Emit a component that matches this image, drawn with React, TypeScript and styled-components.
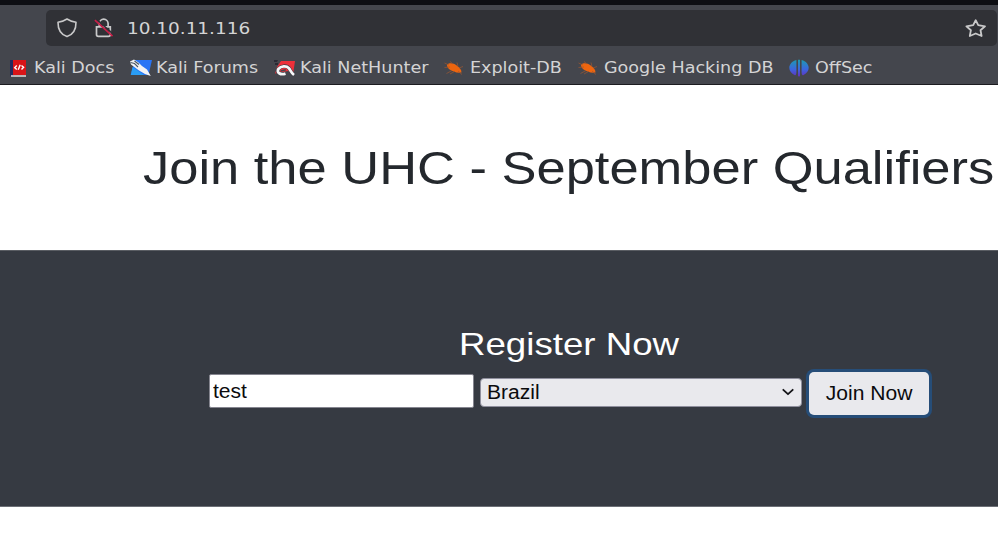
import React from "react";
import styled, { createGlobalStyle } from "styled-components";

const GlobalStyle = createGlobalStyle`
  * { box-sizing: border-box; }
  body { margin: 0; background: #fff; overflow: hidden; }
`;

const Page = styled.div`
  width: 998px;
  height: 559px;
  overflow: hidden;
  background: #fff;
  font-family: "Liberation Sans", Arial, sans-serif;
`;

const Browser = styled.header`
  height: 85px;
  background: #44464d;
  border-top: 5px solid #0d0e13;
  border-bottom: 1px solid #1c1c20;
  color: #d4d4d5;
  font-family: "DejaVu Sans", Verdana, sans-serif;
`;

const AddressBar = styled.div`
  display: flex;
  align-items: center;
  width: 951px;
  height: 36px;
  margin: 5px 0 0 46px;
  padding: 0 11px 0 10px;
  background: #303136;
  border-radius: 5px;
`;

const LockSlot = styled.span`
  display: flex;
  margin: 0 13px 0 15px;
`;

const Stretch = styled.span<{ $x: number; $center?: boolean }>`
  display: inline-block;
  white-space: pre;
  transform: scaleX(${(p) => p.$x});
  transform-origin: ${(p) => (p.$center ? "center" : "left")};
`;

const Address = styled.div`
  flex: 1;
  padding-top: 2px;
  font-size: 16px;
  line-height: 20px;
`;

const Bookmarks = styled.nav`
  display: grid;
  grid-template-columns: 121px 144px 170px 134px 211px 100px;
  height: 38px;
  padding: 4px 0 0 9px;
  font-size: 16px;
  line-height: 34px;
`;

const Bookmark = styled.div<{ $icon: number }>`
  display: grid;
  grid-template-columns: ${(p) => p.$icon}px 1fr;
  align-items: center;
  height: 36px;
  svg { display: block; }
`;

const Hero = styled.section`
  display: flex;
  justify-content: flex-start;
  height: 165px;
  padding: 56px 0 0 143px;
`;

const Title = styled.h1`
  margin: 0;
  color: #24282d;
  font-size: 46.5px;
  font-weight: 400;
  line-height: 54px;
`;

const Register = styled.section`
  height: 257px;
  background: #363a42;
  border-top: 1px solid #5a5d63;
  border-bottom: 1px solid #6c6f76;
  padding: 74px 0 0 208px;
`;

const Subtitle = styled.h2`
  width: 722px;
  margin: 0;
  color: #fff;
  font-size: 32px;
  font-weight: 400;
  line-height: 38px;
  text-align: center;
`;

const Form = styled.form`
  display: flex;
  align-items: center;
  height: 48px;
  margin-top: 5px;
  color: #0b0b0d;
  font-size: 19.5px;
  line-height: 24px;
`;

const TextBox = styled.div`
  width: 265px;
  height: 34px;
  margin: 0 6px 2px 1px;
  padding: 4px 0 0 3px;
  background: #fff;
  border: 1px solid #85858f;
  border-radius: 2px;
`;

const SelectBox = styled.div`
  display: flex;
  align-items: center;
  justify-content: space-between;
  width: 322px;
  height: 29px;
  margin: 0 7px 0 0;
  padding: 0 7px 0 6px;
  background: #e9e9ed;
  border: 1px solid #8f8f9d;
  border-radius: 4px;
`;

const JoinButton = styled.div`
  width: 120px;
  height: 43px;
  margin-top: 3px;
  padding-top: 9px;
  background: #e9e9ed;
  border-radius: 5px;
  box-shadow: 0 0 0 3px #264d78;
  text-align: center;
`;

const ShieldIcon = () => (
  <svg width="22" height="22" viewBox="0 0 22 22" fill="none" stroke="#c9c9ca" strokeWidth="1.6" strokeLinejoin="round">
    <path d="M11 2C8.6 3.6 5.8 4.6 2 5.2C1.9 11.3 4.5 17.3 11 19.6C17.5 17.3 20.1 11.3 20 5.2C16.2 4.6 13.4 3.6 11 2Z" />
  </svg>
);

const LockIcon = () => (
  <svg width="21" height="22" viewBox="0 0 21 22" fill="none">
    <path d="M6.3 9.5V6.6a4.4 4.4 0 0 1 8.8 0v2.9M3.5 9.9h13.8v7.6a1.8 1.8 0 0 1-1.8 1.8H5.3a1.8 1.8 0 0 1-1.8-1.8Z" stroke="#c9c9ca" strokeWidth="1.7" />
    <path d="M3.3 2.1 20.2 17.2" stroke="#303136" strokeWidth="1.6" />
    <path d="M1.9 3.2 19.5 19.1" stroke="#c91e48" strokeWidth="1.7" />
  </svg>
);

const StarIcon = () => (
  <svg width="22" height="20" viewBox="0 0 22 20" fill="none" stroke="#c9c9ca" strokeWidth="1.8" strokeLinejoin="round">
    <path d="M11.7 2.2 14.2 7.2 21 8.3 16.5 12.2 17.6 18 11.7 15.5 5.8 18 6.9 12.2 2.4 8.3 9.2 7.2Z" />
  </svg>
);

const DocsIcon = () => (
  <svg width="18" height="19" viewBox="0 0 18 19">
    <path d="M1 1h4v17H2L1 16Z" fill="#242a5e" />
    <path d="M4 1h13v15H4Z" fill="#d91418" />
    <path d="M2 16.2h15v1.6H2Z" fill="#d8d2d4" />
    <path d="M7.8 6.4 5.7 8.6 7.8 10.5M9.2 10.7 11.2 5.8M12.5 6.4 14.6 8.3 12.5 10.4" fill="none" stroke="#fff" strokeWidth="1.4" />
  </svg>
);

const ForumsIcon = () => (
  <svg width="22" height="18" viewBox="0 0 22 18">
    <path d="M5 1H22L18.5 16H.8L3 8Z" fill="#2874f5" />
    <path d="M2.5 8 14 16H.8Z" fill="#2a9df4" />
    <path d="M0 2.5 4 .5 8.5 3.5 12 7 17 10.5 20.8 17 15 15 9 11.5 5 8.5 1 5.5Z" fill="#f1f2f4" />
    <path d="M.5 3.5 4.5 4.5 8 8M4.5 2 9 5.5" fill="none" stroke="#4b5662" strokeWidth="1.1" />
  </svg>
);

const HunterIcon = () => (
  <svg width="22" height="18" viewBox="0 0 22 18">
    <path d="M7 2H21L19 15.5 14 12 1 14.5 3 8Z" fill="#ed303a" />
    <path d="M0 1h4l-1 2H0ZM1 4h3v2H1Z" fill="#292a34" />
    <path d="M11 14.6C6.2 16.2 2.1 13.2 4.5 9.8C7 6.6 12.5 6.4 14.8 9C16.6 11.2 17.2 13.9 20 16" fill="none" stroke="#353942" strokeWidth="3.7" />
    <path d="M11.5 14.6C6.5 16.4 2.1 13.5 4.5 9.9C7 6.7 12.5 6.5 14.8 9.1C16.6 11.3 17.2 13.9 20 16" fill="none" stroke="#f7f7f8" strokeWidth="2.8" />
    <path d="M6.8 12 11.8 10.8" stroke="#454850" strokeWidth="1.4" />
  </svg>
);

const BugIcon = () => (
  <svg width="20" height="16" viewBox="0 0 20 16">
    <path d="M3 4.8C5.5 2.4 9.5 3 12.7 5.6C15.2 7.5 17.6 9.5 17.5 12.5C13 13.2 8 11.5 5 9C3.7 7.7 3 6.5 3 4.8Z" fill="#ed650f" />
    <path d="M.5 3 5 5M.5 7.5 6 7M2.5 13.5 8 10.5M6 14 11 11.2M6 1.5 9 4M13 2.5 14 6.5M19 6.5 15 8M14 11 18 14.5" fill="none" stroke="#9e5731" strokeWidth=".7" />
  </svg>
);

const OffSecIcon = () => (
  <svg width="20" height="19" viewBox="0 0 20 19">
    <defs>
      <linearGradient id="offsec" gradientUnits="userSpaceOnUse" x1="0" y1="1" x2="0" y2="18">
        <stop stopColor="#1d9ab2" />
        <stop offset=".55" stopColor="#3c65df" />
        <stop offset="1" stopColor="#652dbb" />
      </linearGradient>
    </defs>
    <g fill="url(#offsec)">
      <path d="M7.4 1V13C7.4 15 6.8 16.8 5.8 16.2C2.4 14.5.3 12 .3 8.8S3 2.1 7.4 1Z" />
      <path d="M9 .7h2v15.7L10 18l-1-1.6Z" />
      <path d="M12.6 1v12c0 2 .6 3.8 1.6 3.2c3.4-1.7 5.5-4.2 5.5-7.4S17 2.1 12.6 1Z" />
    </g>
  </svg>
);

const ChevronIcon = () => (
  <svg width="12" height="8" viewBox="0 0 12 8" fill="none" stroke="#151518" strokeWidth="1.8" strokeLinecap="round" strokeLinejoin="round">
    <path d="M1.3 1.8 6 6.2 10.7 1.8" />
  </svg>
);

const bookmarks = [
  { label: "Kali Docs", Icon: DocsIcon, icon: 25 },
  { label: "Kali Forums", Icon: ForumsIcon, icon: 26 },
  { label: "Kali NetHunter", Icon: HunterIcon, icon: 26 },
  { label: "Exploit-DB", Icon: BugIcon, icon: 26 },
  { label: "Google Hacking DB", Icon: BugIcon, icon: 26 },
  { label: "OffSec", Icon: OffSecIcon, icon: 26 },
];

export default function App() {
  return (
    <Page>
      <GlobalStyle />
      <Browser>
        <AddressBar>
          <ShieldIcon />
          <LockSlot><LockIcon /></LockSlot>
          <Address><Stretch $x={1.152}>10.10.11.116</Stretch></Address>
          <StarIcon />
        </AddressBar>
        <Bookmarks>
          {bookmarks.map(({ label, Icon, icon }) => (
            <Bookmark key={label} $icon={icon}>
              <Icon />
              <Stretch $x={1.097}>{label}</Stretch>
            </Bookmark>
          ))}
        </Bookmarks>
      </Browser>
      <Hero>
        <Title><Stretch $x={1.128}>Join the UHC - September Qualifiers</Stretch></Title>
      </Hero>
      <Register>
        <Subtitle><Stretch $x={1.146} $center>Register Now</Stretch></Subtitle>
        <Form>
          <TextBox><Stretch $x={1.08}>test</Stretch></TextBox>
          <SelectBox>
            <Stretch $x={1.08}>Brazil</Stretch>
            <ChevronIcon />
          </SelectBox>
          <JoinButton><Stretch $x={1.08} $center>Join Now</Stretch></JoinButton>
        </Form>
      </Register>
    </Page>
  );
}
